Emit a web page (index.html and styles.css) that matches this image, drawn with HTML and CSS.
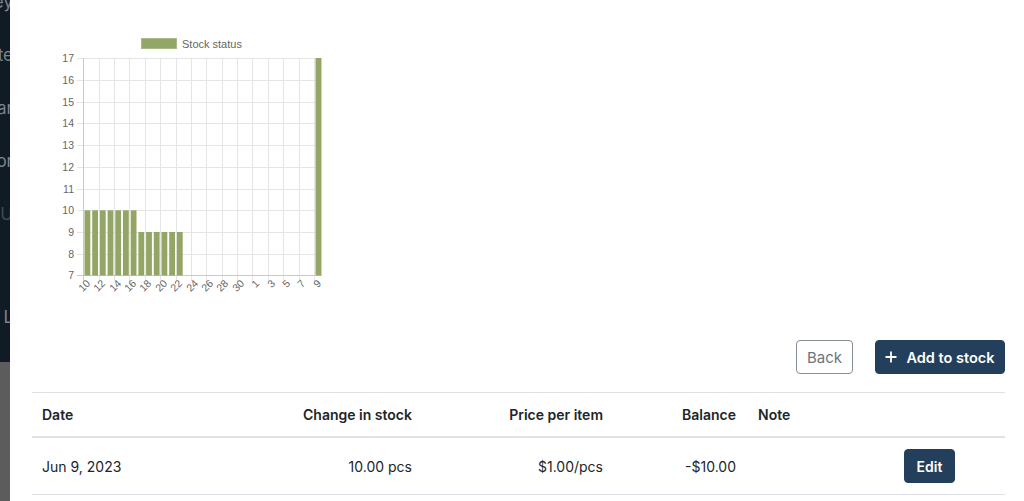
FILE: index.html
```html
<!DOCTYPE html>
<html>
<head>
<meta charset="utf-8">
<link rel="stylesheet" href="styles.css">
</head>
<body>
<div class="layout">
  <aside class="sidebar">
    <nav class="nav">
      <div class="nav-item first"><span>Key</span></div>
      <div class="nav-item"><span>Ite</span></div>
      <div class="nav-item"><span>Car</span></div>
      <div class="nav-item"><span>Vor</span></div>
      <div class="nav-item dim"><span>U</span></div>
      <div class="nav-item last"><span>L</span></div>
    </nav>
    <div class="backdrop"></div>
  </aside>
  <main class="main">
    <div class="chart">
      <svg width="310" height="310" viewBox="32 0 310 310" xmlns="http://www.w3.org/2000/svg" font-family="'Liberation Sans', Arial, sans-serif">
        <!-- legend -->
        <rect x="141.5" y="38.5" width="35" height="10" fill="#93a665" stroke="#a9b987"/>
        <text x="182" y="47.5" font-size="11" fill="#666">Stock status</text>
        <!-- horizontal grid -->
        <g stroke="#e5e5e5" stroke-width="1">
          <line x1="77" y1="58.5" x2="322" y2="58.5"/>
          <line x1="77" y1="80.5" x2="322" y2="80.5"/>
          <line x1="77" y1="102.5" x2="322" y2="102.5"/>
          <line x1="77" y1="123.5" x2="322" y2="123.5"/>
          <line x1="77" y1="145.5" x2="322" y2="145.5"/>
          <line x1="77" y1="167.5" x2="322" y2="167.5"/>
          <line x1="77" y1="189.5" x2="322" y2="189.5"/>
          <line x1="77" y1="210.5" x2="322" y2="210.5"/>
          <line x1="77" y1="232.5" x2="322" y2="232.5"/>
          <line x1="77" y1="254.5" x2="322" y2="254.5"/>
        </g>
        <!-- vertical grid -->
        <g stroke="#e5e5e5" stroke-width="1">
          <line x1="99.5" y1="58" x2="99.5" y2="281"/>
          <line x1="114.5" y1="58" x2="114.5" y2="281"/>
          <line x1="129.5" y1="58" x2="129.5" y2="281"/>
          <line x1="145.5" y1="58" x2="145.5" y2="281"/>
          <line x1="160.5" y1="58" x2="160.5" y2="281"/>
          <line x1="176.5" y1="58" x2="176.5" y2="281"/>
          <line x1="191.5" y1="58" x2="191.5" y2="281"/>
          <line x1="206.5" y1="58" x2="206.5" y2="281"/>
          <line x1="222.5" y1="58" x2="222.5" y2="281"/>
          <line x1="237.5" y1="58" x2="237.5" y2="281"/>
          <line x1="252.5" y1="58" x2="252.5" y2="281"/>
          <line x1="268.5" y1="58" x2="268.5" y2="281"/>
          <line x1="283.5" y1="58" x2="283.5" y2="281"/>
          <line x1="299.5" y1="58" x2="299.5" y2="281"/>
          <line x1="314.5" y1="58" x2="314.5" y2="281"/>
          <line x1="321.5" y1="58" x2="321.5" y2="276"/>
        </g>
        <!-- axes -->
        <g stroke="#c9c9c9" stroke-width="1">
          <line x1="83.5" y1="58" x2="83.5" y2="281"/>
          <line x1="77" y1="275.5" x2="322" y2="275.5"/>
        </g>
        <!-- bars -->
        <g fill="#93a665">
          <rect x="84.5" y="210.3" width="5.8" height="65.2"/>
          <rect x="92.2" y="210.3" width="5.8" height="65.2"/>
          <rect x="99.9" y="210.3" width="5.8" height="65.2"/>
          <rect x="107.6" y="210.3" width="5.8" height="65.2"/>
          <rect x="115.3" y="210.3" width="5.8" height="65.2"/>
          <rect x="123.0" y="210.3" width="5.8" height="65.2"/>
          <rect x="130.7" y="210.3" width="5.8" height="65.2"/>
          <rect x="138.4" y="232" width="5.8" height="43.5"/>
          <rect x="146.1" y="232" width="5.8" height="43.5"/>
          <rect x="153.8" y="232" width="5.8" height="43.5"/>
          <rect x="161.5" y="232" width="5.8" height="43.5"/>
          <rect x="169.2" y="232" width="5.8" height="43.5"/>
          <rect x="176.9" y="232" width="5.8" height="43.5"/>
          <rect x="315.5" y="58" width="5.8" height="217.5"/>
        </g>
        <!-- y labels -->
        <g font-size="10.5" fill="#666" text-anchor="end">
          <text x="74" y="62">17</text>
          <text x="74" y="84">16</text>
          <text x="74" y="106">15</text>
          <text x="74" y="127">14</text>
          <text x="74" y="149">13</text>
          <text x="74" y="171">12</text>
          <text x="74" y="193">11</text>
          <text x="74" y="214">10</text>
          <text x="74" y="236">9</text>
          <text x="74" y="258">8</text>
          <text x="74" y="279">7</text>
        </g>
        <!-- x labels -->
        <g font-size="10.5" fill="#666" text-anchor="end">
          <text transform="translate(91,284) rotate(-45)">10</text>
          <text transform="translate(106,284) rotate(-45)">12</text>
          <text transform="translate(122,284) rotate(-45)">14</text>
          <text transform="translate(137,284) rotate(-45)">16</text>
          <text transform="translate(152,284) rotate(-45)">18</text>
          <text transform="translate(168,284) rotate(-45)">20</text>
          <text transform="translate(183,284) rotate(-45)">22</text>
          <text transform="translate(199,284) rotate(-45)">24</text>
          <text transform="translate(214,284) rotate(-45)">26</text>
          <text transform="translate(229,284) rotate(-45)">28</text>
          <text transform="translate(245,284) rotate(-45)">30</text>
          <text transform="translate(260,284) rotate(-45)">1</text>
          <text transform="translate(276,284) rotate(-45)">3</text>
          <text transform="translate(291,284) rotate(-45)">5</text>
          <text transform="translate(306,284) rotate(-45)">7</text>
          <text transform="translate(322,284) rotate(-45)">9</text>
        </g>
      </svg>
    </div>
    <div class="actions">
      <button class="btn btn-outline">Back</button>
      <button class="btn btn-primary">
        <svg class="plus" width="12" height="12" viewBox="0 0 12 12"><path d="M6 0.5v11M0.5 6h11" stroke="#fff" stroke-width="1.8" fill="none"/></svg>
        Add to stock
      </button>
    </div>
    <div class="table">
      <div class="row head">
        <div class="cell c-date">Date</div>
        <div class="cell c-change">Change in stock</div>
        <div class="cell c-price">Price per item</div>
        <div class="cell c-balance">Balance</div>
        <div class="cell c-note">Note</div>
        <div class="cell c-act"></div>
      </div>
      <div class="row body">
        <div class="cell c-date">Jun 9, 2023</div>
        <div class="cell c-change">10.00 pcs</div>
        <div class="cell c-price">$1.00/pcs</div>
        <div class="cell c-balance">-$10.00</div>
        <div class="cell c-note"></div>
        <div class="cell c-act"><button class="btn btn-primary btn-sm">Edit</button></div>
      </div>
    </div>
  </main>
</div>
</body>
</html>
```

FILE: styles.css
```css
* { box-sizing: border-box; }
html, body { margin: 0; padding: 0; }
body {
  width: 1024px;
  height: 501px;
  overflow: hidden;
  background: #fff;
  font-family: Inter, "Open Sans", Arial, sans-serif;
  color: #212529;
}
.layout { display: flex; height: 501px; }

.sidebar { width: 10px; flex: 0 0 10px; display: flex; flex-direction: column; }
.nav {
  height: 362px;
  background: #111b25;
  overflow: hidden;
  display: flex;
  flex-direction: column;
}
.nav-item {
  height: 53px;
  flex: 0 0 53px;
  display: flex;
  justify-content: flex-end;
  align-items: center;
  overflow: hidden;
  font-size: 17px;
  color: #7d848d;
  white-space: nowrap;
}
.nav-item span { margin-right: -3px; }
.nav-item.first { height: 28px; flex-basis: 28px; align-items: flex-start; }
.nav-item.first span { line-height: 16px; margin-top: -6px; }
.nav-item.dim { color: #414954; }
.nav-item.last { margin-top: 50px; }
.backdrop { flex: 1; background: #5c5c5c; }

.main {
  flex: 1;
  padding: 0 19px 0 22px;
  display: flex;
  flex-direction: column;
}
.chart { height: 310px; }
.chart svg { display: block; }

.actions {
  margin-top: 30px;
  display: flex;
  justify-content: flex-end;
  gap: 22px;
}
.btn {
  font-family: Inter, "Open Sans", Arial, sans-serif;
  font-size: 15px;
  height: 34px;
  border-radius: 4px;
  display: inline-flex;
  align-items: center;
  justify-content: center;
  cursor: pointer;
}
.btn-outline {
  width: 57px;
  background: #fff;
  border: 1px solid #868e96;
  color: #6c757d;
  font-weight: 400;
}
.btn-primary {
  background: #233f5b;
  border: 1px solid #233f5b;
  color: #fff;
  font-weight: 600;
}
.actions .btn-primary { width: 130px; gap: 9px; font-size: 14.5px; }
.plus { display: block; }
.btn-sm { width: 51px; height: 34px; font-size: 14px; }

.table { margin-top: 18px; border-top: 1px solid #dee2e6; }
.row {
  display: grid;
  grid-template-columns: 218px 172px 191px 133px 148px 111px;
  align-items: center;
}
.row.head { height: 45px; border-bottom: 2px solid #dee2e6; font-weight: 600; font-size: 14px; }
.row.body { height: 57px; border-bottom: 1px solid #dee2e6; font-size: 14px; }
.cell { padding: 0 10px; }
.c-change, .c-price, .c-balance { text-align: right; }
.c-note { padding-left: 12px; }
```
